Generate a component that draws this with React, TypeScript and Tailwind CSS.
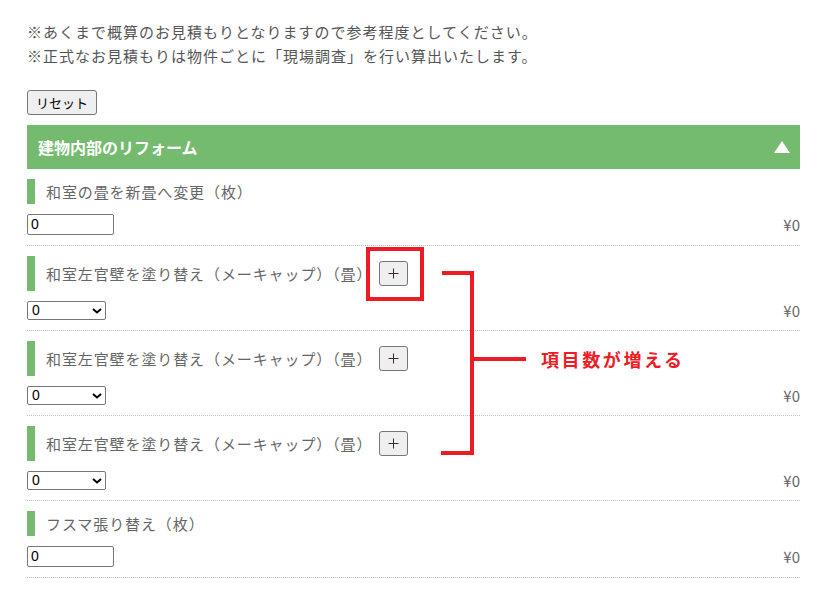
import React from 'react';

const jp = { fontFamily: '"Noto Sans CJK JP", "Noto Sans", sans-serif' };
const latin = { fontFamily: '"Liberation Sans", Arial, sans-serif' };

function Plus({ annotate }: { annotate?: boolean }) {
  return (
    <div className="relative ml-[7px] flex">
      <button className="w-[29px] h-[25px] bg-[#efefef] border border-[#767676] rounded-[3px] flex items-center justify-center">
        <svg width="11" height="11" viewBox="0 0 11 11">
          <path d="M5.5 0.5v10M0.5 5.5h10" stroke="#3a2a2a" strokeWidth="1" />
        </svg>
      </button>
      {annotate && (
        <div className="absolute -top-[14px] -left-[13px] w-[58px] h-[54px] border-[4px] border-[#ed1c24]" />
      )}
    </div>
  );
}

function Qty({ kind }: { kind: 'input' | 'select' }) {
  if (kind === 'input') {
    return (
      <input
        defaultValue="0"
        className="block w-[87px] h-[21px] border border-[#767676] rounded-[2px] bg-white px-[3px] text-[14px] text-black"
        style={latin}
      />
    );
  }
  return (
    <div className="relative w-[79px] h-[19px]">
      <select
        defaultValue="0"
        className="block appearance-none w-full h-full border border-[#767676] rounded-[2px] bg-white pl-[4px] text-[14px] leading-[17px] text-black"
        style={latin}
      >
        <option value="0">0</option>
        <option value="1">1</option>
        <option value="2">2</option>
      </select>
      <svg className="absolute right-[4px] top-[7px] pointer-events-none" width="10" height="6" viewBox="0 0 10 6">
        <path d="M1 1l4 3.5L9 1" fill="none" stroke="#000" strokeWidth="2" />
      </svg>
    </div>
  );
}

function Item({
  label,
  kind,
  plus,
  annotate,
}: {
  label: string;
  kind: 'input' | 'select';
  plus?: boolean;
  annotate?: boolean;
}) {
  return (
    <div className="pt-[10px] pb-[10px] border-b border-dotted border-[#bdbdbd]">
      <div className="flex items-center border-l-[8px] border-[#75bb6f] pl-[11px] py-[5px]">
        <span className="text-[15px] leading-[15px] tracking-[0.9px] text-[#666]">{label}</span>
        {plus && <Plus annotate={annotate} />}
      </div>
      <div className="mt-[10px] flex items-center justify-between">
        <Qty kind={kind} />
        <span className="text-[15px] leading-[19px] text-[#666]">¥0</span>
      </div>
    </div>
  );
}

export default function App() {
  const wall = '和室左官壁を塗り替え（メーキャップ）（畳）';
  return (
    <div className="relative w-[823px] h-[589px] bg-white overflow-hidden" style={jp}>
      <div className="pl-[27px] w-[800px] pt-[20px]">
        <p className="text-[15px] leading-[24px] tracking-[1px] text-[#555]">
          ※あくまで概算のお見積もりとなりますので参考程度としてください。
          <br />
          ※正式なお見積もりは物件ごとに「現場調査」を行い算出いたします。
        </p>

        <button className="block mt-[22px] h-[25px] px-[8px] bg-[#efefef] border border-[#767676] rounded-[3px] text-[13px] text-black">
          リセット
        </button>

        <div className="mt-[10px] h-[44px] bg-[#75bb6f] flex items-center justify-between pl-[11px] pr-[10px]">
          <span className="text-white font-bold text-[16px]">建物内部のリフォーム</span>
          <svg width="16" height="12" viewBox="0 0 16 12">
            <path d="M8 0L16 12H0z" fill="#fff" />
          </svg>
        </div>

        <Item label="和室の畳を新畳へ変更（枚）" kind="input" />
        <Item label={wall} kind="select" plus annotate />
        <Item label={wall} kind="select" plus />
        <Item label={wall} kind="select" plus />
        <Item label="フスマ張り替え（枚）" kind="input" />
      </div>

      {/* annotation bracket */}
      <div className="absolute left-[442px] top-[271px] w-[32px] h-[4px] bg-[#ed1c24]" />
      <div className="absolute left-[470px] top-[271px] w-[4px] h-[184px] bg-[#ed1c24]" />
      <div className="absolute left-[441px] top-[451px] w-[33px] h-[4px] bg-[#ed1c24]" />
      <div className="absolute left-[473px] top-[357px] w-[53px] h-[4px] bg-[#ed1c24]" />
      <div className="absolute left-[541px] top-[346px] text-[18px] leading-[26px] tracking-[2.6px] font-bold text-[#ed1c24]">
        項目数が増える
      </div>
    </div>
  );
}
